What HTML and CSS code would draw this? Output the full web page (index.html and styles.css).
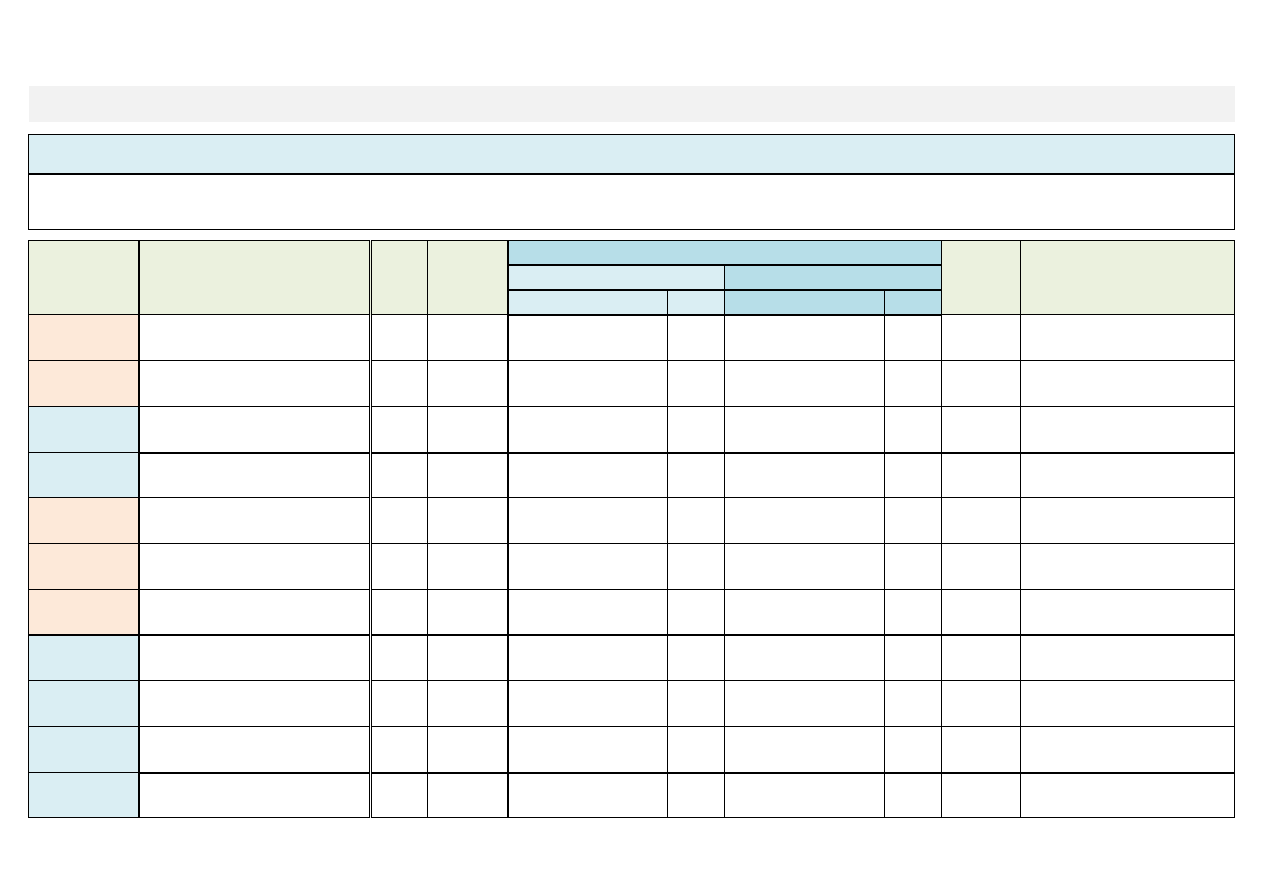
FILE: index.html
```html
<!DOCTYPE html>
<html lang="en">
<head>
    <meta charset="UTF-8">
    <meta name="viewport" content="width=device-width, initial-scale=1.0">
    <title>Sheet</title>
    <link rel="stylesheet" href="styles.css">
</head>
<body>
    <div class="page">
        <div class="toolbar"></div>

        <div class="title-box">
            <div class="title-head"></div>
            <div class="title-body"></div>
        </div>

        <table class="grid">
            <colgroup>
                <col class="c1"><col class="c2"><col class="c3"><col class="c4">
                <col class="c5"><col class="c6"><col class="c7"><col class="c8">
                <col class="c9"><col class="c10">
            </colgroup>
            <thead>
                <tr class="h first">
                    <th rowspan="3" class="green key"></th>
                    <th rowspan="3" class="green dbl"></th>
                    <th rowspan="3" class="green"></th>
                    <th rowspan="3" class="green split"></th>
                    <th colspan="4" class="blue-dk thick-b"></th>
                    <th rowspan="3" class="green"></th>
                    <th rowspan="3" class="green"></th>
                </tr>
                <tr class="h">
                    <th colspan="2" class="blue-lt thick-b"></th>
                    <th colspan="2" class="blue-dk thick-b"></th>
                </tr>
                <tr class="h">
                    <th class="blue-lt"></th>
                    <th class="blue-lt"></th>
                    <th class="blue-dk"></th>
                    <th class="blue-dk"></th>
                </tr>
            </thead>
            <tbody id="rows"></tbody>
        </table>
    </div>

    <script>
        // first column colour and top border weight for each row
        const rows = [
            { fill: 'peach', h: 46 },
            { fill: 'peach', h: 46 },
            { fill: 'blue-lt', h: 46 },
            { fill: 'blue-lt', h: 45, group: 'part' },
            { fill: 'peach', h: 46 },
            { fill: 'peach', h: 46 },
            { fill: 'peach', h: 45 },
            { fill: 'blue-lt', h: 46, group: 'full' },
            { fill: 'blue-lt', h: 46 },
            { fill: 'blue-lt', h: 46 },
            { fill: 'blue-lt', h: 45, group: 'part' }
        ];

        const body = document.getElementById('rows');
        rows.forEach(row => {
            const tr = document.createElement('tr');
            tr.style.height = row.h + 'px';
            if (row.group) tr.className = 'group-' + row.group;
            for (let i = 0; i < 10; i++) {
                const td = document.createElement('td');
                if (i === 0) td.className = 'key ' + row.fill;
                if (i === 1) td.className = 'dbl';
                if (i === 3) td.className = 'split';
                tr.appendChild(td);
            }
            body.appendChild(tr);
        });
    </script>
</body>
</html>
```

FILE: styles.css
```css
body {
    margin: 0;
    font-family: "Liberation Sans", Arial, sans-serif;
    background: #fff;
}

.page {
    padding: 86px 28px 40px 28px;
    width: 1207px;
}

.toolbar {
    height: 36px;
    margin-left: 1px;
    background: #f2f2f2;
}

.title-box {
    margin-top: 12px;
    border: 1px solid #000;
}

.title-head {
    height: 38px;
    background: #daeef3;
    border-bottom: 2px solid #000;
}

.title-body {
    height: 54px;
}

.grid {
    margin-top: 10px;
    width: 1207px;
    border-collapse: collapse;
    table-layout: fixed;
    border: 1px solid #000;
}

.c1 { width: 110px; }
.c2 { width: 232px; }
.c3 { width: 57px; }
.c4 { width: 80px; }
.c5 { width: 160px; }
.c6 { width: 57px; }
.c7 { width: 160px; }
.c8 { width: 57px; }
.c9 { width: 79px; }
.c10 { width: 214px; }

th, td {
    border: 1px solid #000;
    padding: 0;
}

.grid tr.h {
    height: 25px;
}

.grid tr.h.first {
    height: 24px;
}

.grid thead tr:last-child th {
    border-bottom: 2px solid #000;
}

.thick-b { border-bottom: 2px solid #000; }
.key { border-right: 2px solid #000; }
.dbl { border-right: 3px double #000; }
.split { border-right: 2px solid #000; }

.group-part td:not(:first-child),
.group-full td {
    border-top: 2px solid #000;
}

.green { background: #ebf1de; }
.blue-lt { background: #daeef3; }
.blue-dk { background: #b7dee8; }
.peach { background: #fde9d9; }
```
